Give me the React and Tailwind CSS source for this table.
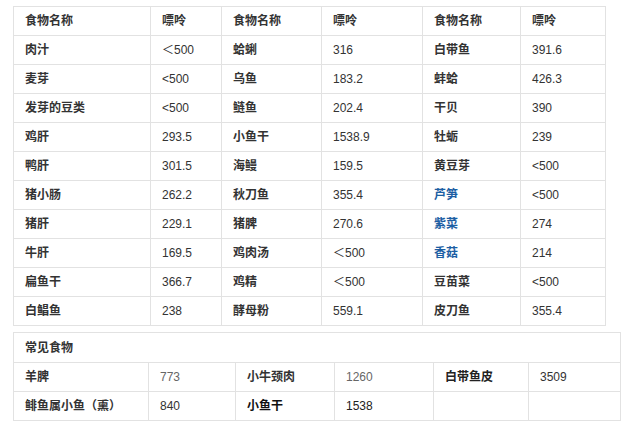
const FONT = { fontFamily: '"Liberation Sans", Arial, "Noto Sans CJK SC", sans-serif' };

const BLUE = 'blue';

// [name, value] triples per row: 3 pairs
const MAIN_ROWS = [
    [['肉汁'], ['＜500'], ['蛤蜊'], ['316'], ['白带鱼'], ['391.6']],
    [['麦芽'], ['<500'], ['乌鱼'], ['183.2'], ['蚌蛤'], ['426.3']],
    [['发芽的豆类'], ['<500'], ['鲢鱼'], ['202.4'], ['干贝'], ['390']],
    [['鸡肝'], ['293.5'], ['小鱼干'], ['1538.9'], ['牡蛎'], ['239']],
    [['鸭肝'], ['301.5'], ['海鳗'], ['159.5'], ['黄豆芽'], ['<500']],
    [['猪小肠'], ['262.2'], ['秋刀鱼'], ['355.4'], ['芦笋', BLUE], ['<500']],
    [['猪肝'], ['229.1'], ['猪脾'], ['270.6'], ['紫菜', BLUE], ['274']],
    [['牛肝'], ['169.5'], ['鸡肉汤'], ['＜500'], ['香菇', BLUE], ['214']],
    [['扁鱼干'], ['366.7'], ['鸡精'], ['＜500'], ['豆苗菜'], ['<500']],
    [['白鲳鱼'], ['238'], ['酵母粉'], ['559.1'], ['皮刀鱼'], ['355.4']],
];

const MAIN_COLS = ['w-[137px]', 'w-[71px]', 'w-[100px]', 'w-[101px]', 'w-[98px]', 'w-[85px]'];
const EXTRA_COLS = ['w-[135px]', 'w-[87px]', 'w-[99px]', 'w-[99px]', 'w-[95px]', 'w-[92px]'];

const cell = 'border border-[#e2e2e2] h-[29px] px-[11px] py-0 text-[12px] leading-none align-middle text-left';

function MainTable() {
    return (
        <table className="table-fixed border-collapse w-[592px]">
            <colgroup>
                {MAIN_COLS.map((w, i) => (
                    <col key={i} className={w} />
                ))}
            </colgroup>
            <tbody>
                <tr>
                    {['食物名称', '嘌呤', '食物名称', '嘌呤', '食物名称', '嘌呤'].map((h, i) => (
                        <td key={i} className={`${cell} font-bold text-[#333]`}>
                            {h}
                        </td>
                    ))}
                </tr>
                {MAIN_ROWS.map((row, r) => (
                    <tr key={r}>
                        {row.map(([text, tone], i) => {
                            const isName = i % 2 === 0;
                            let color = 'text-[#333]';
                            if (tone === BLUE) color = 'text-[#1c5ea3]';
                            return (
                                <td key={i} className={`${cell} ${color} ${isName ? 'font-bold' : ''}`}>
                                    {text}
                                </td>
                            );
                        })}
                    </tr>
                ))}
            </tbody>
        </table>
    );
}

function ExtraTable() {
    return (
        <table className="table-fixed border-collapse w-[607px] mt-[6px]">
            <colgroup>
                {EXTRA_COLS.map((w, i) => (
                    <col key={i} className={w} />
                ))}
            </colgroup>
            <tbody>
                <tr>
                    <td colSpan={6} className={`${cell} h-[30px] font-bold text-[#333]`}>
                        常见食物
                    </td>
                </tr>
                <tr>
                    <td className={`${cell} font-bold text-[#333]`}>羊脾</td>
                    <td className={`${cell} text-[#666]`}>773</td>
                    <td className={`${cell} font-bold text-[#333]`}>小牛颈肉</td>
                    <td className={`${cell} text-[#666]`}>1260</td>
                    <td className={`${cell} font-bold text-[#222]`}>白带鱼皮</td>
                    <td className={`${cell} text-[#333]`}>3509</td>
                </tr>
                <tr>
                    <td className={`${cell} h-[28px] font-bold text-[#333]`}>鲱鱼属小鱼（熏）</td>
                    <td className={`${cell} h-[28px] text-[#333]`}>840</td>
                    <td className={`${cell} h-[28px] font-bold text-[#111]`}>小鱼干</td>
                    <td className={`${cell} h-[28px] text-[#222]`}>1538</td>
                    <td className={`${cell} h-[28px]`}></td>
                    <td className={`${cell} h-[28px]`}></td>
                </tr>
            </tbody>
        </table>
    );
}

export default function App() {
    return (
        <div className="w-[642px] h-[430px] bg-white overflow-hidden pt-[6px] pl-[13px]" style={FONT}>
            <MainTable />
            <ExtraTable />
        </div>
    );
}
